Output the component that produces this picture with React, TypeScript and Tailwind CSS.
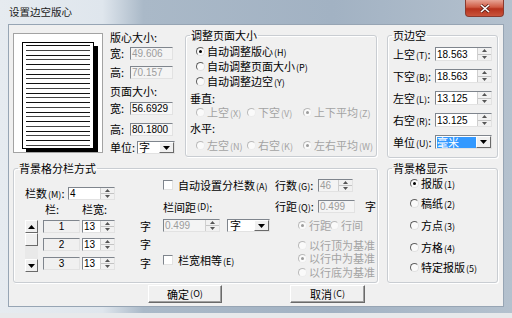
import React from "react";

const SUNK =
  "border border-t-[#7f858d] border-l-[#7f858d] border-r-[#e2e2e2] border-b-[#e2e2e2]";
const RAISED =
  "border border-t-white border-l-white border-r-[#6a6a6a] border-b-[#6a6a6a] bg-[#f0f0f0]";
const GROUP =
  "border border-[#c9cdd2] rounded-[3px] shadow-[inset_1px_1px_0_#ffffff,1px_1px_0_#ffffff] p-0 m-0 min-w-0";

function K({ c }: { c: string }) {
  return <span className="text-[9px] ml-[1px]">({c})</span>;
}

function Radio({ on = false, dis = false }: { on?: boolean; dis?: boolean }) {
  return (
    <span
      className={
        "inline-flex w-[9px] h-[9px] shrink-0 items-center justify-center rounded-full border bg-[#fafafa] " +
        (dis
          ? "border-t-[#b9b9b9] border-l-[#b9b9b9] border-r-[#ececec] border-b-[#ececec]"
          : "border-t-[#5f5f5f] border-l-[#5f5f5f] border-r-[#e0e0e0] border-b-[#e0e0e0]")
      }
    >
      {on ? (
        <span className={"w-[3px] h-[3px] rounded-full " + (dis ? "bg-[#9c9c9c]" : "bg-black")} />
      ) : null}
    </span>
  );
}

function RadioItem({
  on = false,
  dis = false,
  children,
}: {
  on?: boolean;
  dis?: boolean;
  children: React.ReactNode;
}) {
  return (
    <div className={"flex items-center gap-[2px] h-full " + (dis ? "text-[#a3a3a3]" : "text-black")}>
      <Radio on={on} dis={dis} />
      <span className="block whitespace-nowrap leading-[11px] h-[11px]">{children}</span>
    </div>
  );
}

function Check() {
  return <span className={"inline-block w-[10px] h-[10px] shrink-0 bg-white " + SUNK} />;
}

function Spin() {
  return (
    <div className="w-[14px] h-full flex flex-col border-l border-[#cfcfcf] bg-[#f1f1f1]">
      <div className="flex-1 flex items-center justify-center border-b border-[#c4c4c4]">
        <svg width="5" height="3">
          <path d="M0 3L2.5 0L5 3Z" fill="#555" />
        </svg>
      </div>
      <div className="flex-1 flex items-center justify-center">
        <svg width="5" height="3">
          <path d="M0 0L2.5 3L5 0Z" fill="#555" />
        </svg>
      </div>
    </div>
  );
}

function DropBtn() {
  return (
    <div className={"w-[15px] h-full flex items-center justify-center " + RAISED}>
      <svg width="7" height="4">
        <path d="M0 0H7L3.5 4Z" fill="#000" />
      </svg>
    </div>
  );
}

function Field({
  cls,
  v,
  dis = false,
  spin = false,
  bg = "bg-white",
}: {
  cls: string;
  v: string;
  dis?: boolean;
  spin?: boolean;
  bg?: string;
}) {
  return (
    <div className={`flex h-full ${cls} ${SUNK} ${bg}`}>
      <span
        className={
          "flex-1 flex items-center pl-[1px] text-[10px] font-['Liberation_Sans',sans-serif] " +
          (dis ? "text-[#9c9c9c]" : "text-black")
        }
      >
        {v}
      </span>
      {spin ? <Spin /> : null}
    </div>
  );
}

function Legend({ children }: { children: React.ReactNode }) {
  return <legend className="ml-[4px] px-[1px] leading-[13px] text-[11px]">{children}</legend>;
}

function PagePreview() {
  const lines = [];
  for (let i = 0; i < 22; i++) {
    const y = 11.5 + Math.round(i * 4.76);
    lines.push(
      <line key={i} x1="12" x2="76" y1={y} y2={y} stroke={i % 2 === 0 ? "#111" : "#444"} strokeWidth="1" />
    );
  }
  return (
    <svg width="88" height="118">
      <rect x="12" y="12" width="72" height="106" fill="#000" />
      <rect x="8.5" y="8.5" width="71" height="106" fill="#fff" stroke="#000" />
      {lines}
    </svg>
  );
}

export default function App() {
  return (
    <div className="w-[512px] h-[318px] overflow-hidden bg-[#e7e9eb] font-['Noto_Sans_CJK_SC','Noto_Sans',sans-serif] text-[11px] text-black">
      <div className="h-[313px] flex flex-col bg-[linear-gradient(to_right,#e6ebf0_0%,#dfe6ed_20%,#aab9c8_28%,#a2b2c3_65%,#b4c1ce_100%)]">
        {/* title bar */}
        <div className="h-[24px] flex items-start justify-between shrink-0">
          <div className="pl-[9px] pt-[5px] text-[10.5px] leading-[14px] text-[#1b1b1b]">设置边空版心</div>
          <div className="mr-[8px] w-[39px] h-[17px] rounded-b-[4px] border border-t-0 border-[#8a3a2e] bg-[linear-gradient(#e7a495,#cf5a43_45%,#b6321c_55%,#c9533b)] flex items-center justify-center">
            <svg width="10" height="9">
              <path d="M1 1L9 8M9 1L1 8" stroke="#5a1f16" strokeWidth="3" />
              <path d="M1 1L9 8M9 1L1 8" stroke="#fff" strokeWidth="1.6" />
            </svg>
          </div>
        </div>

        {/* client */}
        <div className="mx-[8px] h-[283px] bg-[#f0f0f0] border border-[#97a5b4] flex flex-col pl-[4px] pt-[4px]">
          {/* top row */}
          <div className="flex h-[129px] shrink-0">
            <div className="mt-[4px] w-[90px] h-[120px] bg-white border border-[#a3a3a3]">
              <PagePreview />
            </div>

            {/* sizes column */}
            <div className="ml-[7px] w-[75px] flex flex-col">
              <div className="mt-[1px] h-[15px] flex items-center">版心大小:</div>
              <div className="mt-[2px] h-[13px] flex items-center">
                <span className="w-[20px]">宽:</span>
                <Field cls="w-[43px]" v="49.606" dis bg="bg-[#f4f4f4]" />
              </div>
              <div className="mt-[6px] h-[13px] flex items-center">
                <span className="w-[20px]">高:</span>
                <Field cls="w-[43px]" v="70.157" dis bg="bg-[#f4f4f4]" />
              </div>
              <div className="mt-[6px] h-[13px] flex items-center">页面大小:</div>
              <div className="mt-[4px] h-[13px] flex items-center">
                <span className="w-[20px]">宽:</span>
                <Field cls="w-[43px]" v="56.6929" bg="bg-[#f7f7f7]" />
              </div>
              <div className="mt-[8px] h-[13px] flex items-center">
                <span className="w-[20px]">高:</span>
                <Field cls="w-[43px]" v="80.1800" bg="bg-[#f7f7f7]" />
              </div>
              <div className="mt-[5px] h-[13px] flex items-center">
                <span className="w-[27px]">单位:</span>
                <div className={"w-[38px] h-full flex bg-white " + SUNK}>
                  <span className="flex-1 flex items-center pl-[1px]">字</span>
                  <DropBtn />
                </div>
              </div>
            </div>

            {/* 调整页面大小 */}
            <fieldset className={"w-[192px] h-[128px] " + GROUP}>
              <Legend>调整页面大小</Legend>
              <div className="flex flex-col pl-[4px]">
                <div className="mt-[2px] h-[15px] ml-[6px]">
                  <RadioItem on>
                    自动调整版心<K c="H" />
                  </RadioItem>
                </div>
                <div className="h-[15px] ml-[6px]">
                  <RadioItem>
                    自动调整页面大小<K c="P" />
                  </RadioItem>
                </div>
                <div className="h-[15px] ml-[6px]">
                  <RadioItem>
                    自动调整边空<K c="Y" />
                  </RadioItem>
                </div>
                <div className="mt-[2px] h-[14px] flex items-center">垂直:</div>
                <div className="h-[14px] ml-[6px] flex">
                  <div className="w-[51px]">
                    <RadioItem dis>
                      上空<K c="X" />
                    </RadioItem>
                  </div>
                  <div className="w-[56px]">
                    <RadioItem dis>
                      下空<K c="V" />
                    </RadioItem>
                  </div>
                  <RadioItem dis on>
                    上下平均<K c="Z" />
                  </RadioItem>
                </div>
                <div className="mt-[2px] h-[14px] flex items-center">水平:</div>
                <div className="mt-[3px] h-[14px] ml-[6px] flex">
                  <div className="w-[51px]">
                    <RadioItem dis>
                      左空<K c="N" />
                    </RadioItem>
                  </div>
                  <div className="w-[56px]">
                    <RadioItem dis>
                      右空<K c="K" />
                    </RadioItem>
                  </div>
                  <RadioItem dis on>
                    左右平均<K c="W" />
                  </RadioItem>
                </div>
              </div>
            </fieldset>

            {/* 页边空 */}
            <fieldset className={"ml-[10px] w-[111px] h-[129px] " + GROUP}>
              <Legend>页边空</Legend>
              <div className="flex flex-col pl-[5px]">
                {[
                  ["上空", "T", "18.563", "mt-[5px]"],
                  ["下空", "B", "18.563", "mt-[8px]"],
                  ["左空", "L", "13.125", "mt-[8px]"],
                  ["右空", "R", "13.125", "mt-[8px]"],
                ].map(([a, k, v, m]) => (
                  <div key={k} className={"h-[14px] flex items-center " + m}>
                    <span className="w-[42px] whitespace-nowrap">
                      {a}
                      <K c={k} />:
                    </span>
                    <Field cls="w-[57px]" v={v} spin />
                  </div>
                ))}
                <div className="mt-[8px] h-[14px] flex items-center">
                  <span className="w-[42px] whitespace-nowrap">
                    单位<K c="U" />:
                  </span>
                  <div className={"w-[57px] h-full flex bg-white " + SUNK}>
                    <div className="flex-1 flex items-center pl-[1px]">
                      <span className="w-[39px] h-[11px] bg-[#3399ff] text-white flex items-center leading-none">
                        毫米
                      </span>
                    </div>
                    <DropBtn />
                  </div>
                </div>
              </div>
            </fieldset>
          </div>

          {/* bottom row */}
          <div className="flex mt-[4px] h-[121px] shrink-0">
            <fieldset className={"w-[365px] h-[121px] " + GROUP}>
              <Legend>背景格分栏方式</Legend>
              <div className="flex">
                {/* left column */}
                <div className="w-[149px] pl-[11px] flex flex-col">
                  <div className="mt-[12px] h-[13px] flex items-center">
                    <span className="w-[43px] whitespace-nowrap">
                      栏数<K c="M" />:
                    </span>
                    <Field cls="w-[47px]" v="4" spin />
                  </div>
                  <div className="mt-[2px] h-[14px] flex items-center">
                    <span className="ml-[20px] w-[37px]">栏:</span>
                    <span>栏宽:</span>
                  </div>
                  <div className="mt-[4px] flex">
                    <div className="w-[13px] h-[52px] flex flex-col bg-[#e9e9e9]">
                      <div className={"h-[13px] flex items-center justify-center " + RAISED}>
                        <svg width="7" height="4">
                          <path d="M0 4H7L3.5 0Z" fill="#000" />
                        </svg>
                      </div>
                      <div className={"h-[13px] " + RAISED} />
                      <div className="flex-1" />
                      <div className={"h-[13px] flex items-center justify-center " + RAISED}>
                        <svg width="7" height="4">
                          <path d="M0 0H7L3.5 4Z" fill="#000" />
                        </svg>
                      </div>
                    </div>
                    <div className="ml-[5px] flex flex-col">
                      {[
                        ["1", ""],
                        ["2", "mt-[5px]"],
                        ["3", "mt-[6px]"],
                      ].map(([n, m]) => (
                        <div key={n} className={"h-[13px] flex items-center " + m}>
                          <div
                            className={
                              "w-[37px] h-full flex items-center justify-center text-[10px] font-['Liberation_Sans',sans-serif] bg-[#f0f0f0] " +
                              SUNK
                            }
                          >
                            {n}
                          </div>
                          <div className="ml-[2px] h-full">
                            <Field cls="w-[33px]" v="13" spin />
                          </div>
                          <span className="ml-[25px]">字</span>
                        </div>
                      ))}
                    </div>
                  </div>
                </div>

                {/* middle column */}
                <div className="w-[112px] flex flex-col">
                  <div className="mt-[3px] h-[14px] flex items-center">
                    <Check />
                    <span className="ml-[5px] whitespace-nowrap">
                      自动设置分栏数<K c="A" />
                    </span>
                  </div>
                  <div className="mt-[8px] h-[14px] flex items-center whitespace-nowrap">
                    栏间距<K c="D" />:
                  </div>
                  <div className="mt-[5px] h-[13px] flex items-center">
                    <Field cls="w-[57px]" v="0.499" dis spin bg="bg-[#f4f4f4]" />
                    <div className={"ml-[7px] w-[43px] h-full flex bg-white " + SUNK}>
                      <span className="flex-1 flex items-center pl-[2px]">字</span>
                      <DropBtn />
                    </div>
                  </div>
                  <div className="mt-[21px] h-[14px] flex items-center">
                    <Check />
                    <span className="ml-[5px] whitespace-nowrap">
                      栏宽相等<K c="E" />
                    </span>
                  </div>
                </div>

                {/* right column */}
                <div className="flex flex-col">
                  <div className="mt-[4px] h-[13px] flex items-center">
                    <span className="w-[43px] whitespace-nowrap">
                      行数<K c="G" />:
                    </span>
                    <Field cls="w-[35px]" v="46" dis spin bg="bg-[#f4f4f4]" />
                  </div>
                  <div className="mt-[8px] h-[13px] flex items-center">
                    <span className="w-[43px] whitespace-nowrap">
                      行距<K c="Q" />:
                    </span>
                    <Field cls="w-[37px]" v="0.499" dis bg="bg-[#f4f4f4]" />
                    <span className="ml-[10px]">字</span>
                  </div>
                  <div className="mt-[5px] h-[14px] ml-[23px] flex">
                    <div className="w-[32px]">
                      <RadioItem dis on>
                        行距
                      </RadioItem>
                    </div>
                    <RadioItem dis>行间</RadioItem>
                  </div>
                  <div className="mt-[6px] h-[14px] ml-[23px]">
                    <RadioItem dis>以行顶为基准</RadioItem>
                  </div>
                  <div className="h-[13px] ml-[23px]">
                    <RadioItem dis on>
                      以行中为基准
                    </RadioItem>
                  </div>
                  <div className="mt-[1px] h-[13px] ml-[23px]">
                    <RadioItem dis>以行底为基准</RadioItem>
                  </div>
                </div>
              </div>
            </fieldset>

            {/* 背景格显示 */}
            <fieldset className={"ml-[9px] w-[111px] h-[121px] " + GROUP}>
              <Legend>背景格显示</Legend>
              <div className="flex flex-col pl-[22px]">
                <div className="mt-[1px] h-[14px]">
                  <RadioItem on>
                    报版<K c="1" />
                  </RadioItem>
                </div>
                <div className="mt-[6px] h-[14px]">
                  <RadioItem>
                    稿纸<K c="2" />
                  </RadioItem>
                </div>
                <div className="mt-[8px] h-[14px]">
                  <RadioItem>
                    方点<K c="3" />
                  </RadioItem>
                </div>
                <div className="mt-[8px] h-[14px]">
                  <RadioItem>
                    方格<K c="4" />
                  </RadioItem>
                </div>
                <div className="mt-[6px] h-[14px]">
                  <RadioItem>
                    特定报版<K c="5" />
                  </RadioItem>
                </div>
              </div>
            </fieldset>
          </div>

          {/* buttons */}
          <div className="flex mt-[2px] h-[18px] shrink-0">
            <button
              className={
                "ml-[135px] w-[74px] h-full flex items-center justify-center text-[11px] shadow-[inset_-1px_-1px_0_#a0a0a0] " +
                RAISED
              }
            >
              确定<K c="O" />
            </button>
            <button
              className={
                "ml-[68px] w-[75px] h-full flex items-center justify-center text-[11px] shadow-[inset_-1px_-1px_0_#a0a0a0] " +
                RAISED
              }
            >
              取消<K c="C" />
            </button>
          </div>
        </div>
      </div>
    </div>
  );
}
